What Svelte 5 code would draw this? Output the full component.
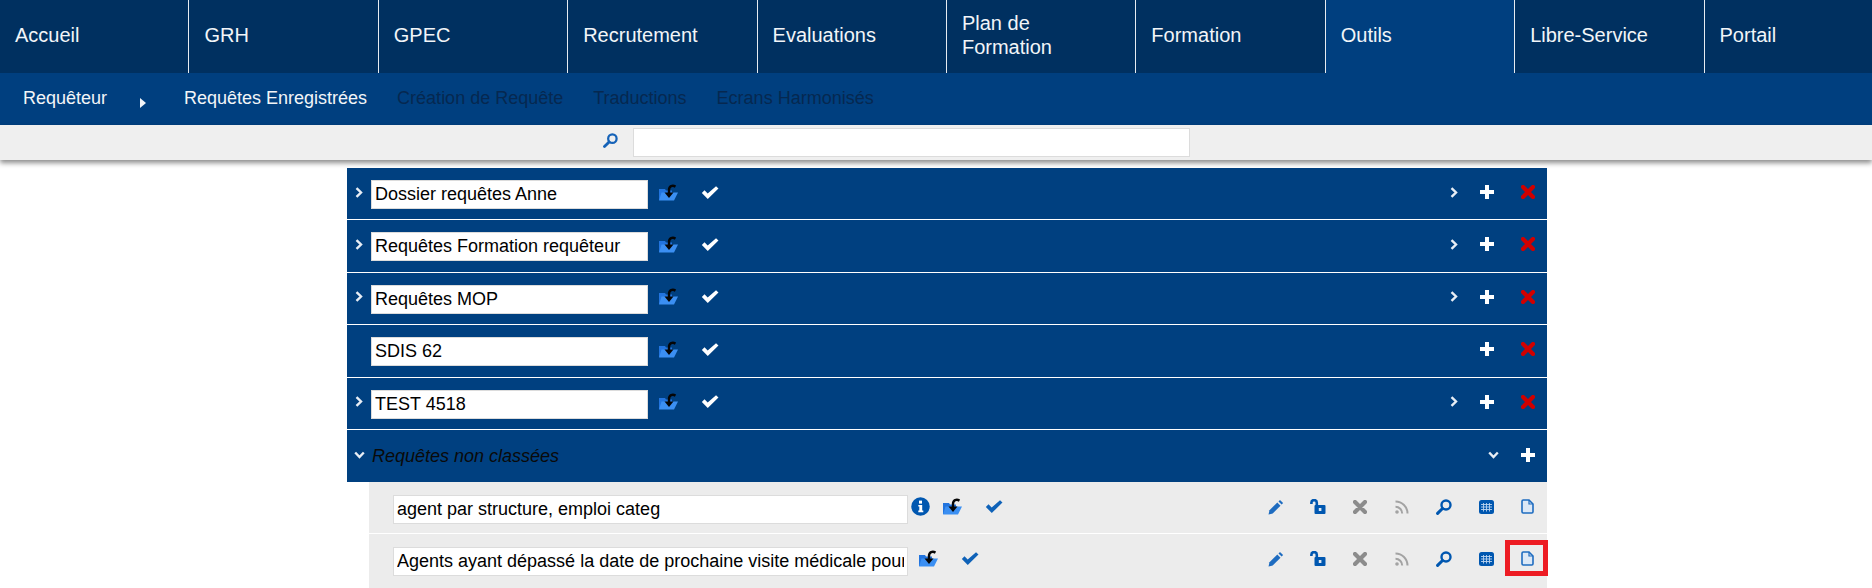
<script>
  const nav = ['Accueil','GRH','GPEC','Recrutement','Evaluations','Plan de Formation','Formation','Outils','Libre-Service','Portail'];
  const folders = [
    { name: 'Dossier requêtes Anne', open: true },
    { name: 'Requêtes Formation requêteur', open: true },
    { name: 'Requêtes MOP', open: true },
    { name: 'SDIS 62', open: false },
    { name: 'TEST 4518', open: true }
  ];
  const queries = [
    { name: 'agent par structure, emploi categ', info: true, marked: false },
    { name: 'Agents ayant dépassé la date de prochaine visite médicale pour', info: false, marked: true }
  ];
</script>

{#snippet chevR()}
  <svg width="8" height="11" viewBox="0 0 8 11"><path d="M1.500 1.200 6 5.500 1.500 9.800" fill="none" stroke="#e8eef5" stroke-width="2.400"/></svg>
{/snippet}
{#snippet chevD()}
  <svg width="11" height="8" viewBox="0 0 11 8"><path d="M1.200 1.500 5.500 6l4.300-4.500" fill="none" stroke="#e8eef5" stroke-width="2.400"/></svg>
{/snippet}
{#snippet folder()}
  <svg width="20" height="17" viewBox="0 0 20 17">
    <path d="M0 5h6l1 1.500h6V16H0z" fill="#2274de"/>
    <path d="M2.500 8.500H19L15 16.500H0z" fill="#3b8ff2"/>
    <path d="M16.500 2.600C13.500.8 10 2 10 6v4" fill="none" stroke="#050505" stroke-width="2.400"/>
    <path d="M5.500 8.500h9L10 14z" fill="#050505"/>
  </svg>
{/snippet}
{#snippet check(color)}
  <svg width="18" height="15" viewBox="0 0 17 14"><path d="M.8 7.400 3.300 4.900l3 3L14.200 1l2.300 2.300L6.400 13.200z" fill={color}/></svg>
{/snippet}
{#snippet plus()}
  <svg width="14" height="14" viewBox="0 0 14 14"><path d="M5 0h4v5h5v4H9v5H5V9H0V5h5z" fill="#fff"/></svg>
{/snippet}
{#snippet cross(color)}
  <svg width="14" height="14" viewBox="0 0 14 14"><path d="M2 2l10 10M12 2 2 12" stroke={color} stroke-width="4.200" stroke-linecap="round"/></svg>
{/snippet}
{#snippet info()}
  <svg width="19" height="19" viewBox="0 0 19 19"><circle cx="9.500" cy="9.500" r="9.200" fill="#0057b0"/><rect x="8" y="3.600" width="3" height="3" fill="#fff"/><path d="M7.300 8h3.900v5.600h1.100v1.600H7.300v-1.600h1V9.500h-1z" fill="#fff"/></svg>
{/snippet}
{#snippet pencil()}
  <svg width="16" height="16" viewBox="0 0 16 16"><path d="M.5 15.500l1-4.200 7.800-7.800 3.200 3.200-7.800 7.800z" fill="#1e6cc0"/><path d="M10.500 2.400 12 .9l3.100 3.100L13.600 5.500z" fill="#1e6cc0"/></svg>
{/snippet}
{#snippet lock()}
  <svg width="16" height="15" viewBox="0 0 16 15"><path d="M1.400 5V3.800a2.700 2.700 0 0 1 5.400 0V7" fill="none" stroke="#0057b0" stroke-width="2.600"/><rect x="4.500" y="6" width="11" height="9" rx="1" fill="#0057b0"/><rect x="8.800" y="9" width="2.600" height="3" fill="#dfe8f2"/></svg>
{/snippet}
{#snippet rss()}
  <svg width="14" height="14" viewBox="0 0 14 14"><circle cx="2" cy="12" r="1.800" fill="#a3a3a3"/><path d="M.5 6.800a6.700 6.700 0 0 1 6.700 6.700M.5 1.500a12 12 0 0 1 12 12" fill="none" stroke="#a3a3a3" stroke-width="2"/></svg>
{/snippet}
{#snippet search(size = 16, color = '#0057b0')}
  <svg width={size} height={size} viewBox="0 0 16 16"><circle cx="10" cy="6" r="4.500" fill="none" stroke={color} stroke-width="2.400"/><path d="M6.500 9.500 1.600 14.400" stroke={color} stroke-width="3" stroke-linecap="round"/></svg>
{/snippet}
{#snippet grid()}
  <svg width="15" height="14" viewBox="0 0 15 14"><rect width="15" height="14" rx="2.500" fill="#0057b0"/><path d="M2 4.500h11M2 7h11M2 9.500h11M4.500 3v8.500M7.500 3v8.500M10.500 3v8.500" stroke="#b9d2ee" stroke-width=".9"/></svg>
{/snippet}
{#snippet doc()}
  <svg width="13" height="15" viewBox="0 0 13 15"><path d="M1 2.200C1 1.500 1.500 1 2.200 1H8l4 4v7.800c0 .7-.5 1.200-1.200 1.200H2.200C1.500 14 1 13.500 1 12.800z" fill="#dce8f6" stroke="#1e6cc0" stroke-width="1.600"/><path d="M8 1v4h4" fill="none" stroke="#1e6cc0" stroke-width="1.200"/></svg>
{/snippet}

<div class="page">
  <nav class="top">
    {#each nav as item}
      <a class="top-item" class:active={item === 'Outils'} href="#top"><span class="top-label">{item}</span></a>
    {/each}
  </nav>

  <nav class="sub">
    <span class="sub-item on first">Requêteur</span>
    <span class="caret"></span>
    <span class="sub-item on">Requêtes Enregistrées</span>
    <span class="sub-item">Création de Requête</span>
    <span class="sub-item">Traductions</span>
    <span class="sub-item">Ecrans Harmonisés</span>
  </nav>

  <div class="searchbar">
    <span class="search-icon">{@render search(15, '#1663b8')}</span>
    <input class="search-input" type="text" aria-label="Recherche" />
  </div>

  <main class="tree">
    {#each folders as f}
      <section class="row folder">
        <span class="toggle">{#if f.open}{@render chevR()}{/if}</span>
        <input class="name name-folder" type="text" value={f.name} />
        <span class="cell">{@render folder()}</span>
        <span class="cell">{@render check('#fff')}</span>
        <span class="spacer"></span>
        {#if f.open}<span class="cell chev-cell">{@render chevR()}</span>{/if}
        <span class="cell plus-cell">{@render plus()}</span>
        <span class="cell end-cell">{@render cross('#d00000')}</span>
      </section>
    {/each}

    <section class="row folder unsorted">
      <span class="toggle">{@render chevD()}</span>
      <em class="unsorted-label">Requêtes non classées</em>
      <span class="spacer"></span>
      <span class="cell chev-wide">{@render chevD()}</span>
      <span class="cell end-cell">{@render plus()}</span>
    </section>

    {#each queries as q}
      <section class="row query">
        <input class="name name-query" type="text" value={q.name} />
        {#if q.info}<span class="cell info-cell">{@render info()}</span>{/if}
        <span class="cell">{@render folder()}</span>
        <span class="cell">{@render check('#0f62b8')}</span>
        <span class="spacer"></span>
        <span class="cell tool">{@render pencil()}</span>
        <span class="cell tool">{@render lock()}</span>
        <span class="cell tool">{@render cross('#8c8c8c')}</span>
        <span class="cell tool">{@render rss()}</span>
        <span class="cell tool">{@render search()}</span>
        <span class="cell tool">{@render grid()}</span>
        <span class="cell doc-cell" class:marked={q.marked}>{@render doc()}</span>
      </section>
    {/each}
  </main>
</div>

<style>
  :global(body) {
    margin: 0;
    overflow: hidden;
    background: #fff;
  }
  .page {
    height: 588px;
    overflow: hidden;
    font-family: "Liberation Sans", Arial, sans-serif;
  }
  .top {
    display: flex;
    height: 73px;
    width: 1894px;
    background: #003060;
  }
  .top-item {
    flex: 0 0 189.4px;
    box-sizing: border-box;
    display: flex;
    align-items: center;
    padding: 0 30px 4px 15px;
    border-right: 1px solid #e6ebf1;
    color: #f2f5f8;
    font-size: 20px;
    line-height: 24px;
    text-decoration: none;
  }
  .top-item:last-child { border-right: 0; }
  .top-item.active { background: #003f7f; }
  .sub {
    display: flex;
    align-items: center;
    height: 52px;
    padding: 0 0 2px 8px;
    box-sizing: border-box;
    background: #003f7f;
    font-size: 18px;
    color: #062850;
  }
  .sub-item { padding: 0 15px; }
  .sub-item.on { color: #f2f5f8; }
  .sub-item.first { width: 85px; padding-right: 0; }
  .caret {
    width: 0;
    height: 0;
    margin: 9px 23px 0 32px;
    border-left: 6px solid #f2f5f8;
    border-top: 5px solid transparent;
    border-bottom: 5px solid transparent;
  }
  .searchbar {
    display: flex;
    align-items: center;
    height: 35px;
    box-sizing: border-box;
    background: #efefef;
    box-shadow: 0 3px 5px rgba(0, 0, 0, 0.45);
    padding: 0 0 1px 603px;
    position: relative;
  }
  .search-icon {
    display: flex;
    width: 30px;
    margin-bottom: 3px;
  }
  .search-input {
    box-sizing: border-box;
    width: 557px;
    height: 29px;
    border: 1px solid #dcdcdc;
    background: #fff;
    outline: 0;
  }
  .tree {
    width: 1200px;
    margin: 8px 0 0 347px;
  }
  .row {
    display: flex;
    align-items: flex-start;
    box-sizing: border-box;
    height: 52.4px;
    padding-top: 12px;
  }
  .folder {
    background: #004080;
    border-bottom: 1px solid #fff;
  }
  .unsorted { height: 52.5px; border-bottom: 0; padding-top: 13px; }
  .toggle {
    flex: 0 0 24px;
    height: 29px;
    margin-top: -2.5px;
    display: flex;
    align-items: center;
    justify-content: center;
    box-sizing: border-box;
  }
  .name {
    box-sizing: border-box;
    height: 29px;
    border: 1px solid #dcdcdc;
    background: #fff;
    color: #000;
    font: 18px "Liberation Sans", Arial, sans-serif;
    padding: 0 3px;
    outline: 0;
  }
  .name-folder { width: 277px; }
  .name-query { width: 515px; margin-left: 24px; }
  .cell {
    position: relative;
    flex: 0 0 41px;
    height: 29px;
    margin-top: -2.5px;
    display: flex;
    align-items: center;
    justify-content: center;
  }
  .info-cell { flex-basis: 24px; }
  .chev-cell { flex-basis: 24px; }
  .chev-wide { flex-basis: 30px; }
  .plus-cell { flex-basis: 42px; }
  .end-cell { flex-basis: 39px; }
  .tool { flex-basis: 42px; }
  .doc-cell { flex-basis: 40px; }
  .spacer { flex: 1; }
  .unsorted-label {
    line-height: 29px;
    font-size: 18px;
    color: #0a0a0a;
    margin: -1px 0 0 1px;
  }
  .query {
    height: 52px;
    padding-top: 12.5px;
    background: #ececec;
    border-bottom: 1px solid #fff;
    margin-left: 22px;
    width: 1178px;
  }
  .query:last-child { border-bottom: 0; height: 54px; }
  .marked::after {
    content: "";
    position: absolute;
    left: -2px;
    top: -4px;
    width: 43px;
    height: 36px;
    box-sizing: border-box;
    border: 5px solid #ed1c24;
  }
</style>
